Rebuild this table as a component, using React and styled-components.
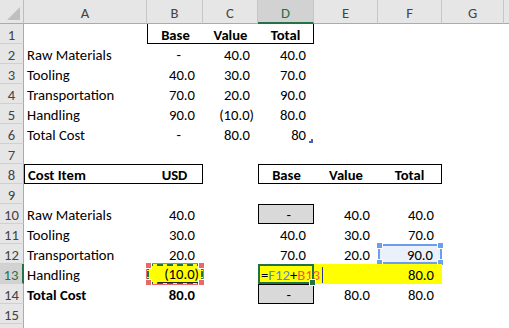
import React from 'react';
import styled, { createGlobalStyle, css } from 'styled-components';

const GREEN = '#217346';
const BLUE = '#6d9eeb';
const RED = '#e8696a';

const COLS = ['A', 'B', 'C', 'D', 'E', 'F', 'G', ''];

// accounting format: positives leave room for the ")" and the dash sits left of it
const acct = (v) => {
  if (v === '-') return { text: '-', pad: 22 };
  if (v.startsWith('(')) return { text: v, pad: 4 };
  return { text: v, pad: 8 };
};

const ROWS = [
  {
    B: { t: 'Base', bold: true, align: 'center', edges: 'lb' },
    C: { t: 'Value', bold: true, align: 'center', edges: 'b' },
    D: { t: 'Total', bold: true, align: 'center', edges: 'rb' },
  },
  { A: { t: 'Raw Materials' }, B: { n: '-' }, C: { n: '40.0' }, D: { n: '40.0' } },
  { A: { t: 'Tooling' }, B: { n: '40.0' }, C: { n: '30.0' }, D: { n: '70.0' } },
  { A: { t: 'Transportation' }, B: { n: '70.0' }, C: { n: '20.0' }, D: { n: '90.0' } },
  { A: { t: 'Handling' }, B: { n: '90.0' }, C: { n: '(10.0)' }, D: { n: '80.0' } },
  { A: { t: 'Total Cost' }, B: { n: '-' }, C: { n: '80.0' }, D: { n: '80', mark: true } },
  {},
  {
    A: { t: 'Cost Item', bold: true, edges: 'tlb' },
    B: { t: 'USD', bold: true, align: 'center', edges: 'trb' },
    D: { t: 'Base', bold: true, align: 'center', edges: 'tlb' },
    E: { t: 'Value', bold: true, align: 'center', edges: 'tb' },
    F: { t: 'Total', bold: true, align: 'center', edges: 'trb' },
  },
  {},
  {
    A: { t: 'Raw Materials' }, B: { n: '40.0' },
    D: { n: '-', kind: 'box' }, E: { n: '40.0' }, F: { n: '40.0' },
  },
  { A: { t: 'Tooling' }, B: { n: '30.0' }, D: { n: '40.0' }, E: { n: '30.0' }, F: { n: '70.0' } },
  {
    A: { t: 'Transportation' }, B: { n: '20.0' },
    D: { n: '70.0' }, E: { n: '20.0' }, F: { n: '90.0', kind: 'select' },
  },
  {
    A: { t: 'Handling' }, B: { n: '(10.0)', kind: 'copy' },
    D: { kind: 'active' }, E: { fill: '#ffff00' }, F: { n: '80.0', fill: '#ffff00' },
  },
  {
    A: { t: 'Total Cost', bold: true }, B: { n: '80.0', bold: true },
    D: { n: '-', kind: 'box' }, E: { n: '80.0' }, F: { n: '80.0' },
  },
  {},
  {},
];

const ACTIVE_ROW = 13;
const ACTIVE_COL = 'D';
const VISIBLE_LABELS = 15;

const GlobalStyle = createGlobalStyle`
  html, body {
    margin: 0;
    background: #fff;
    overflow: hidden;
  }
  body {
    font-family: Carlito, "Liberation Sans", Arial, sans-serif;
    font-size: 14.67px;
    color: #000;
  }
`;

const Sheet = styled.div`
  display: grid;
  grid-template-columns: 24px 123px 56px 55px 56px 64px 64px 62px 1fr;
  grid-template-rows: 24px;
  grid-auto-rows: 20px;
  width: 509px;
  height: 328px;
  overflow: hidden;
`;

const Corner = styled.div`
  box-sizing: border-box;
  background: #e6e6e6;
  border-right: 1px solid #bdbdbd;
  border-bottom: 1px solid #ababab;
  display: flex;
  align-items: flex-end;
  justify-content: flex-end;
  padding: 0 3px 3px 0;
`;

const ColHeader = styled.div`
  box-sizing: border-box;
  background: ${(p) => (p.$active ? '#d2d2d2' : '#e6e6e6')};
  color: ${(p) => (p.$active ? GREEN : '#444')};
  border-right: 1px solid #c6c6c6;
  border-bottom: ${(p) => (p.$active ? `2px solid ${GREEN}` : '1px solid #ababab')};
  display: flex;
  align-items: center;
  justify-content: center;
  padding-top: 3px;
`;

const RowHeader = styled.div`
  box-sizing: border-box;
  background: ${(p) => (p.$active ? '#d2d2d2' : '#e6e6e6')};
  color: ${(p) => (p.$active ? GREEN : '#444')};
  border-right: ${(p) => (p.$active ? `2px solid ${GREEN}` : '1px solid #ababab')};
  border-bottom: 1px solid #d0d0d0;
  display: flex;
  align-items: center;
  justify-content: center;
  padding-top: 2px;
`;

const edge = (has) => (has ? '1px solid #000' : 'none');

const Cell = styled.div`
  box-sizing: border-box;
  position: relative;
  display: flex;
  align-items: center;
  justify-content: ${(p) =>
    p.$align === 'right' ? 'flex-end' : p.$align === 'center' ? 'center' : 'flex-start'};
  padding: 2px ${(p) => p.$pr ?? 3}px 0 3px;
  white-space: nowrap;
  font-weight: ${(p) => (p.$bold ? 700 : 400)};
  background: ${(p) => p.$fill || 'transparent'};
  border-top: ${(p) => edge(p.$edges?.includes('t'))};
  border-right: ${(p) => edge(p.$edges?.includes('r'))};
  border-bottom: ${(p) => edge(p.$edges?.includes('b'))};
  border-left: ${(p) => edge(p.$edges?.includes('l'))};
`;

const BoxCell = styled(Cell)`
  background: #d9d9d9;
  border: 1px solid #000;
`;

const SelectedCell = styled(Cell)`
  background: #eaf1fb;
  border: 2px solid ${BLUE};
`;

const CopiedCell = styled(Cell)`
  background: #ffff00;
  border: 2px dashed ${GREEN};
  outline: 1px solid ${RED};
`;

const ActiveCell = styled(Cell)`
  z-index: 1;
  background: #ffff00;
  border: 2px solid ${GREEN};
  padding-left: 1px;
  overflow: visible;
`;

const Formula = styled.span`
  position: relative;
  display: inline-flex;
  align-items: center;
`;

const Handle = styled.span`
  position: absolute;
  width: 5px;
  height: 5px;
  background: ${(p) => p.$color};
  border: 1px solid #fff;
  ${(p) => (p.$v === 't' ? css`top: -4px;` : css`bottom: -4px;`)}
  ${(p) => (p.$h === 'l' ? css`left: -4px;` : css`right: -4px;`)}
`;

const Underlined = styled.span`
  border-bottom: 1px solid #222;
  padding-left: 6px;
  line-height: 15px;
`;

const Ref = styled.span`
  color: ${(p) => p.$color};
`;

const Caret = styled.span`
  display: inline-block;
  width: 1px;
  height: 16px;
  margin-left: 2px;
  background: #2b3a8c;
`;

const AutoMark = styled.span`
  position: absolute;
  right: 1px;
  bottom: 1px;
  width: 2px;
  height: 2px;
  border-right: 2px solid #4a5fb4;
  border-bottom: 2px solid #4a5fb4;
`;

const CornerGlyph = () => (
  <svg width="13" height="13" viewBox="0 0 13 13">
    <polygon points="13,0 13,13 0,13" fill="#bfbfbf" />
  </svg>
);

const Corners = ({ color }) => (
  <>
    <Handle $color={color} $v="t" $h="l" />
    <Handle $color={color} $v="t" $h="r" />
    <Handle $color={color} $v="b" $h="l" />
    <Handle $color={color} $v="b" $h="r" />
  </>
);

const renderCell = (spec, key) => {
  if (!spec) return <Cell key={key} />;
  const num = spec.n ? acct(spec.n) : null;
  const align = num ? 'right' : spec.align;
  const props = {
    key,
    $align: align,
    $bold: spec.bold,
    $pr: num ? num.pad : undefined,
    $fill: spec.fill,
    $edges: spec.edges,
  };
  const text = num ? num.text : spec.t;

  if (spec.kind === 'box') return <BoxCell {...props}>{text}</BoxCell>;
  if (spec.kind === 'select')
    return (
      <SelectedCell {...props} $pr={num.pad - 1}>
        {text}
        <Corners color={BLUE} />
      </SelectedCell>
    );
  if (spec.kind === 'copy')
    return (
      <CopiedCell {...props} $pr={2}>
        <Underlined>{text}</Underlined>
        <Corners color={RED} />
      </CopiedCell>
    );
  if (spec.kind === 'active')
    return (
      <ActiveCell key={key}>
        <Formula>
          =<Ref $color="#4f86e0">F12</Ref>+<Ref $color="#ee5a4a">B13</Ref>
          <Caret />
        </Formula>
        <Handle $color={GREEN} $v="b" $h="r" />
      </ActiveCell>
    );
  return (
    <Cell {...props}>
      {text}
      {spec.mark && <AutoMark />}
    </Cell>
  );
};

export default function App() {
  return (
    <>
      <GlobalStyle />
      <Sheet>
        <Corner>
          <CornerGlyph />
        </Corner>
        {COLS.map((c, i) => (
          <ColHeader key={`h${i}`} $active={c === ACTIVE_COL}>
            {c}
          </ColHeader>
        ))}
        {ROWS.map((row, r) => (
          <React.Fragment key={r}>
            <RowHeader $active={r + 1 === ACTIVE_ROW}>
              {r < VISIBLE_LABELS ? r + 1 : ''}
            </RowHeader>
            {COLS.map((c, i) => renderCell(row[c], `${r}-${i}`))}
          </React.Fragment>
        ))}
      </Sheet>
    </>
  );
}
